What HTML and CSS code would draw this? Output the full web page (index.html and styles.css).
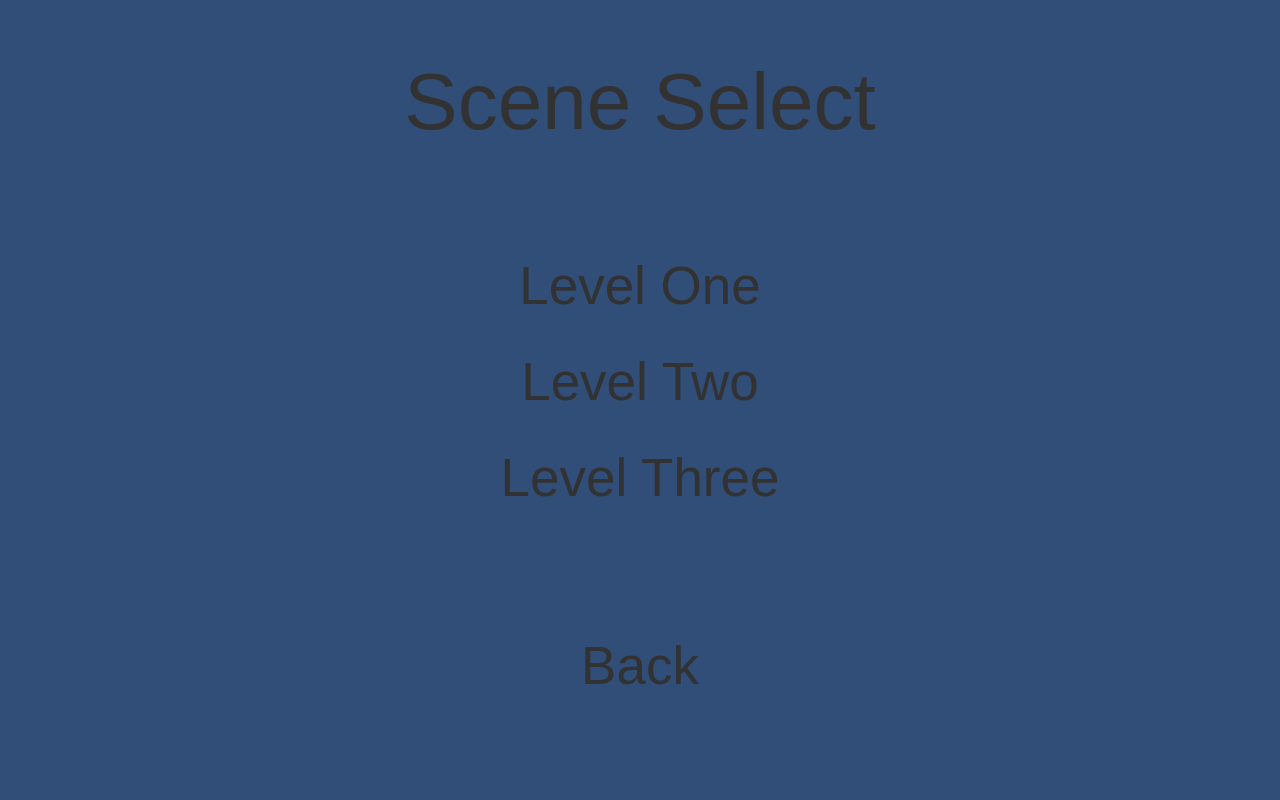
FILE: index.html
```html
<!DOCTYPE html>
<html lang="en">
<head>
<meta charset="utf-8">
<title>Scene Select</title>
<link rel="stylesheet" href="styles.css">
</head>
<body>
<main class="screen">
  <h1 class="title">Scene Select</h1>
  <nav class="levels">
    <button class="menu-btn">Level One</button>
    <button class="menu-btn">Level Two</button>
    <button class="menu-btn">Level Three</button>
  </nav>
  <button class="menu-btn back">Back</button>
</main>
</body>
</html>
```
FILE: styles.css
```css
html, body {
  margin: 0;
  padding: 0;
  height: 100%;
  background: #314e79;
}
.screen {
  height: 800px;
  display: flex;
  flex-direction: column;
  align-items: center;
  font-family: "Liberation Sans", Arial, sans-serif;
  color: #323232;
  box-sizing: border-box;
  padding-top: 62px;
}
.title {
  margin: 0;
  font-size: 80px;
  font-weight: normal;
  line-height: 80px;
}
.levels {
  margin-top: 96px;
  display: flex;
  flex-direction: column;
  align-items: center;
}
.menu-btn {
  background: none;
  border: 0;
  padding: 0;
  margin: 0;
  font-family: inherit;
  color: inherit;
  font-size: 53px;
  line-height: 96px;
  height: 96px;
}
.back {
  margin-top: 92px;
}
```
